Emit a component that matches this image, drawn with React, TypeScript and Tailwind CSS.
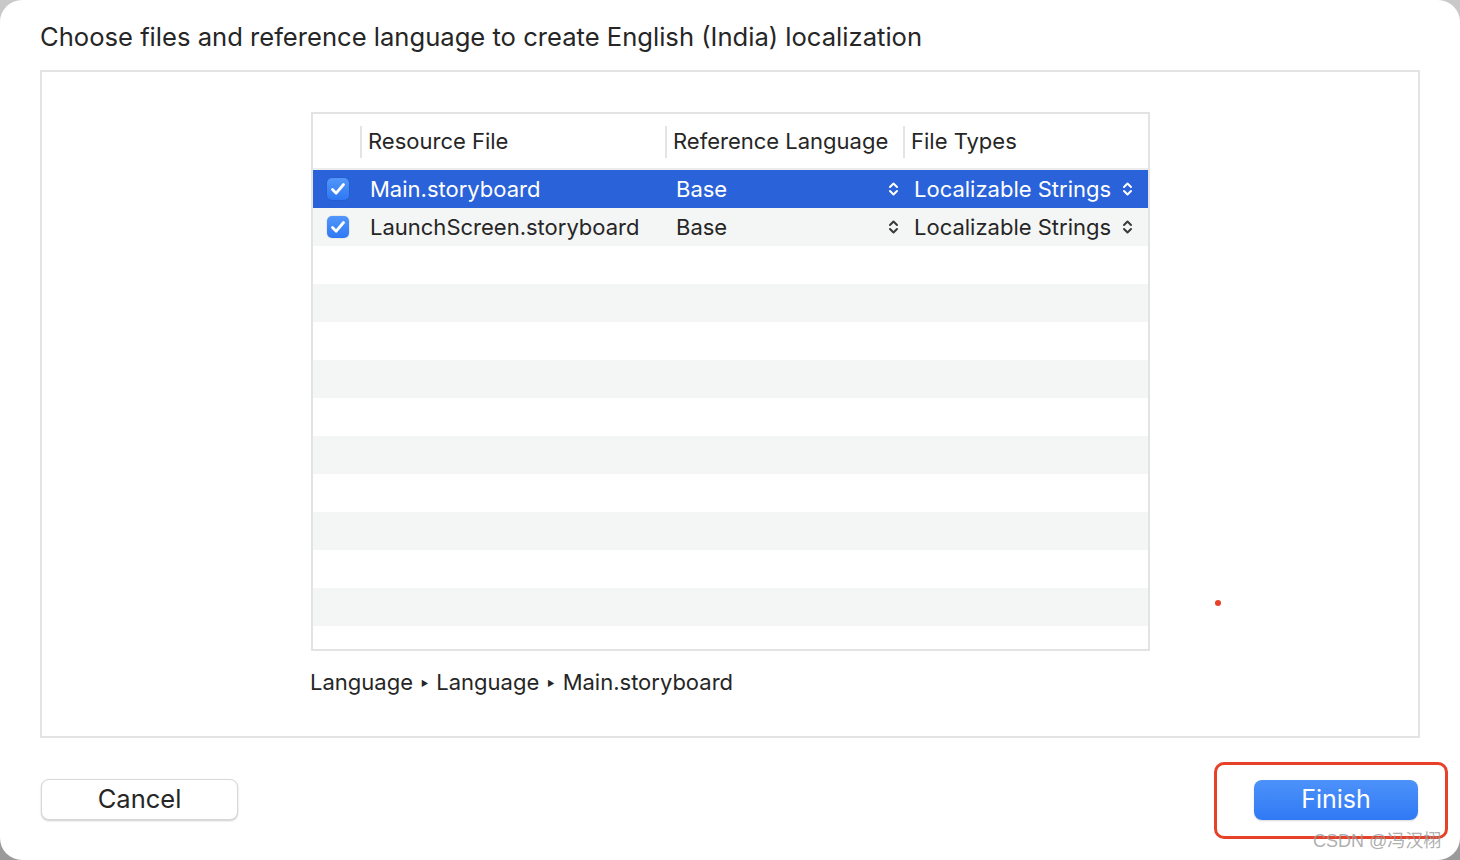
import React from "react";

const font = { fontFamily: "Inter, 'Noto Sans', 'Noto Sans CJK SC', sans-serif" };

function Check() {
  return (
    <div className="w-[22px] h-[22px] rounded-[5px] bg-gradient-to-b from-[#5096fb] to-[#2f78f3] flex items-center justify-center shadow-[0_0_0_0.5px_rgba(0,0,0,0.1)]">
      <svg width="16" height="14" viewBox="0 0 16 14" fill="none">
        <path d="M2.5 7.5 L6.2 11.2 L13.5 2.5" stroke="white" strokeWidth="2.8" strokeLinecap="round" strokeLinejoin="round" />
      </svg>
    </div>
  );
}

function UpDown({ color }: { color: string }) {
  return (
    <svg width="11" height="16" viewBox="0 0 11 16" fill="none">
      <path d="M2 6 L5.5 2.5 L9 6" stroke={color} strokeWidth="2" strokeLinecap="round" strokeLinejoin="round" />
      <path d="M2 10 L5.5 13.5 L9 10" stroke={color} strokeWidth="2" strokeLinecap="round" strokeLinejoin="round" />
    </svg>
  );
}

function Row({ name, selected, bg }: { name: string; selected?: boolean; bg: string }) {
  const text = selected ? "text-white" : "text-[#262626]";
  const chev = selected ? "#ffffff" : "#3a3a3a";
  return (
    <div className={`flex h-[38px] shrink-0 items-center ${bg} ${text} text-[22px]`}>
      <div className="w-[49px] flex justify-center pl-[1px]"><Check /></div>
      <div className="w-[305px] pl-[8px]">{name}</div>
      <div className="w-[238px] pl-[9px] pr-[6px] flex items-center justify-between">
        <span>Base</span>
        <UpDown color={chev} />
      </div>
      <div className="flex-1 pl-[9px] pr-[15px] flex items-center justify-between">
        <span>Localizable Strings</span>
        <UpDown color={chev} />
      </div>
    </div>
  );
}

export default function App() {
  const empty = [false, true, false, true, false, true, false, true, false, true, false];
  return (
    <div className="w-[1460px] h-[860px] bg-gradient-to-b from-[#c9c9c9] to-[#9a9a9a]" style={font}>
      <div className="relative w-full h-full bg-white rounded-[22px] flex flex-col overflow-hidden">
        <div className="pl-[40px] pt-[18px] h-[70px] shrink-0 text-[25.6px] text-[#262626]">
          Choose files and reference language to create English (India) localization
        </div>
        <div className="mx-[40px] h-[668px] shrink-0 border-2 border-[#e3e3e3] flex flex-col pl-[269px] pt-[40px]">
          <div className="w-[839px] h-[539px] shrink-0 border-2 border-[#e3e3e3] flex flex-col overflow-hidden">
            <div className="flex h-[56px] shrink-0 items-center pt-[1px] text-[22px] text-[#262626] border-b-2 border-[#ececec]">
              <div className="w-[49px] h-[32px] border-r-2 border-[#e4e4e4]" />
              <div className="w-[305px] h-[32px] flex items-center pl-[6px] border-r-2 border-[#e4e4e4]">Resource File</div>
              <div className="w-[238px] h-[32px] flex items-center pl-[6px] border-r-2 border-[#e4e4e4]">Reference Language</div>
              <div className="flex-1 h-[32px] flex items-center pl-[6px]">File Types</div>
            </div>
            <Row name="Main.storyboard" selected bg="bg-[#2a62d9]" />
            <Row name="LaunchScreen.storyboard" bg="bg-[#f4f5f5]" />
            {empty.map((g, i) => (
              <div key={i} className={`h-[38px] shrink-0 ${g ? "bg-[#f4f5f5]" : "bg-white"}`} />
            ))}
          </div>
          <div className="mt-[15px] text-[22px] text-[#262626] flex items-center gap-[8px] -ml-[1px]">
            <span>Language</span>
            <span className="text-[8px]">▶</span>
            <span>Language</span>
            <span className="text-[8px]">▶</span>
            <span>Main.storyboard</span>
          </div>
        </div>
        <div className="flex justify-between items-center px-[41px] pt-[41px] pr-[42px]">
          <div className="w-[197px] h-[41px] rounded-[8px] bg-white border border-[#d8d8d8] shadow-[0_1px_2px_rgba(0,0,0,0.2)] flex items-center justify-center text-[25.5px] text-[#262626]">
            Cancel
          </div>
          <div className="w-[164px] h-[40px] rounded-[8px] bg-gradient-to-b from-[#4d92fa] to-[#2f79f4] shadow-[0_1px_2px_rgba(0,0,0,0.15)] flex items-center justify-center text-[25px] text-white">
            Finish
          </div>
        </div>
        <div className="absolute left-[1214px] top-[762px] w-[234px] h-[77px] border-[3.5px] border-[#e8412a] rounded-[10px]" />
        <div className="absolute left-[1215px] top-[600px] w-[6px] h-[6px] rounded-full bg-[#e8412a]" />
        <div className="absolute left-[1313px] top-[828px] text-[18px] text-[#9a9a9a]/80" style={{ fontFamily: "'Liberation Sans', 'Noto Sans CJK SC', sans-serif" }}>
          CSDN @冯汉栩
        </div>
      </div>
    </div>
  );
}
